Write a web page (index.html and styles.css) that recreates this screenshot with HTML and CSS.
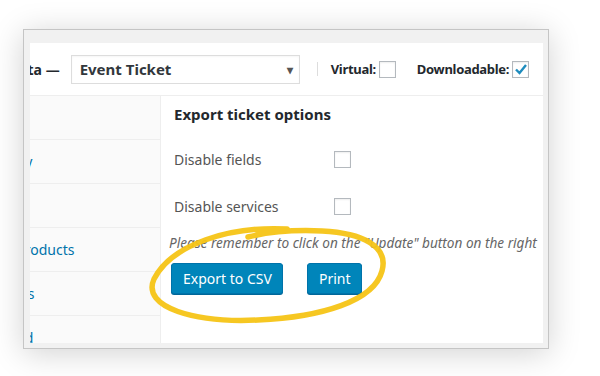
FILE: index.html
```html
<!DOCTYPE html>
<html lang="en">
<head>
    <meta charset="UTF-8">
    <meta name="viewport" content="width=device-width, initial-scale=1.0">
    <title>Event Ticket export</title>
    <link rel="stylesheet" href="styles.css">
</head>
<body>
<div class="frame">
    <div class="panel">
        <!-- Product data header -->
        <div class="head">
            <span class="head-title">Product data &mdash;</span>
            <div class="select">
                <span>Event Ticket</span>
                <span class="arrow">&#9662;</span>
            </div>
            <span class="sep"></span>
            <label class="opt">Virtual: <span class="check"></span></label>
            <label class="opt">Downloadable: <span class="check checked">
                <svg width="14" height="14" viewBox="0 0 14 14"><path d="M2 7.5 L5.5 11 L12 3" fill="none" stroke="#1e8cbe" stroke-width="2.4"/></svg>
            </span></label>
        </div>

        <div class="body">
            <!-- Tabs -->
            <ul class="tabs">
                <li><a>General</a></li>
                <li><a>Inventory</a></li>
                <li><a>Shipping</a></li>
                <li><a>Linked Products</a></li>
                <li><a>Attributes</a></li>
                <li><a>Advanced</a></li>
            </ul>

            <!-- Export options -->
            <div class="main">
                <h3 class="main-title">Export ticket options</h3>
                <div class="field">
                    <span class="field-label">Disable fields</span>
                    <span class="check"></span>
                </div>
                <div class="field">
                    <span class="field-label">Disable services</span>
                    <span class="check"></span>
                </div>
                <p class="note">Please remember to click on the "Update" button on the right</p>
                <div class="actions">
                    <button class="btn">Export to CSV</button>
                    <button class="btn">Print</button>
                </div>
            </div>
        </div>
    </div>

    <!-- Highlight scribble -->
    <svg class="scribble" width="600" height="376" viewBox="0 0 600 376">
        <path d="M287 229 C230 226 172 244 154 279 C141 308 196 323 258 320 C322 317 374 301 382 271 C389 246 362 233 322 231 C300 230 272 231 248 237"
              fill="none" stroke="#f6c416" stroke-width="5.5" stroke-linecap="round" opacity="0.95"/>
    </svg>
</div>
</body>
</html>
```

FILE: styles.css
```css
/* Global styles */
* {
    margin: 0;
    padding: 0;
    box-sizing: border-box;
}

body {
    font-family: "Noto Sans", "Open Sans", sans-serif;
    background-color: #fff;
    color: #23282d;
    width: 600px;
    height: 376px;
    overflow: hidden;
}

.frame {
    width: 526px;
    height: 320px;
    margin: 29px 0 0 23px;
    padding: 13px 5px 5px 6px;
    background-color: #f1f1f1;
    border: 1px solid #c5c5c5;
    box-shadow: 0 4px 30px rgba(0, 0, 0, 0.18);
}

.panel {
    height: 100%;
    background-color: #fff;
    overflow: hidden;
    display: flex;
    flex-direction: column;
}

/* Header */
.head {
    height: 53px;
    flex: none;
    display: flex;
    align-items: center;
    border-bottom: 1px solid #eee;
    white-space: nowrap;
}

.head > * {
    flex: none;
}

.head-title {
    font-size: 14px;
    font-weight: bold;
    margin-left: -78px;
    margin-right: 11px;
}

.select {
    width: 229px;
    height: 29px;
    border: 1px solid #ddd;
    display: flex;
    align-items: center;
    justify-content: space-between;
    padding: 0 6px 0 8px;
    font-size: 15px;
    font-weight: bold;
    color: #32373c;
    box-shadow: inset 0 1px 2px rgba(0, 0, 0, 0.04);
}

.arrow {
    font-size: 12px;
    color: #555;
}

.sep {
    width: 1px;
    height: 14px;
    background-color: #ddd;
    margin: 0 13px 0 17px;
}

.opt {
    display: flex;
    align-items: center;
    font-size: 13px;
    letter-spacing: -0.3px;
    font-weight: bold;
    margin-right: 21px;
}

.check {
    width: 17px;
    height: 17px;
    border: 1px solid #b4b9be;
    background-color: #fff;
    box-shadow: inset 0 1px 2px rgba(0, 0, 0, 0.07);
    display: inline-flex;
    align-items: center;
    justify-content: center;
    flex: none;
}

.opt .check {
    margin-left: 3px;
}

/* Body */
.body {
    flex: 1;
    display: flex;
}

.tabs {
    width: 131px;
    flex: none;
    list-style: none;
    background-color: #fafafa;
    border-right: 1px solid #eee;
    overflow: hidden;
}

.tabs li {
    height: 44px;
    border-bottom: 1px solid #eee;
    display: flex;
    align-items: center;
}

.tabs a {
    margin-left: -61px;
    font-size: 14px;
    color: #0073aa;
    white-space: nowrap;
}

.main {
    flex: 1;
    padding: 8px 0 0 13px;
    white-space: nowrap;
}

.main-title {
    font-size: 15px;
    font-weight: bold;
    line-height: 20px;
    color: #23282d;
    margin-bottom: 26px;
}

.field {
    display: flex;
    align-items: center;
    height: 18px;
    margin-bottom: 29px;
}

.field-label {
    width: 160px;
    font-size: 14px;
    color: #555;
}

.note {
    margin: -11px 0 0 -5px;
    font-size: 13.6px;
    font-style: italic;
    color: #666;
}

.actions {
    display: flex;
    gap: 24px;
    margin: 11px 0 0 -3px;
}

.btn {
    height: 31px;
    padding: 0 11px;
    font-family: inherit;
    font-size: 14px;
    color: #fff;
    background-color: #0085ba;
    border: 1px solid #0073aa;
    border-radius: 3px;
    box-shadow: 0 1px 0 #006799;
}

.btn:first-child {
    width: 112px;
}

.btn:last-child {
    width: 55px;
}

/* Scribble overlay */
.scribble {
    position: absolute;
    left: 0;
    top: 0;
    pointer-events: none;
}
```
